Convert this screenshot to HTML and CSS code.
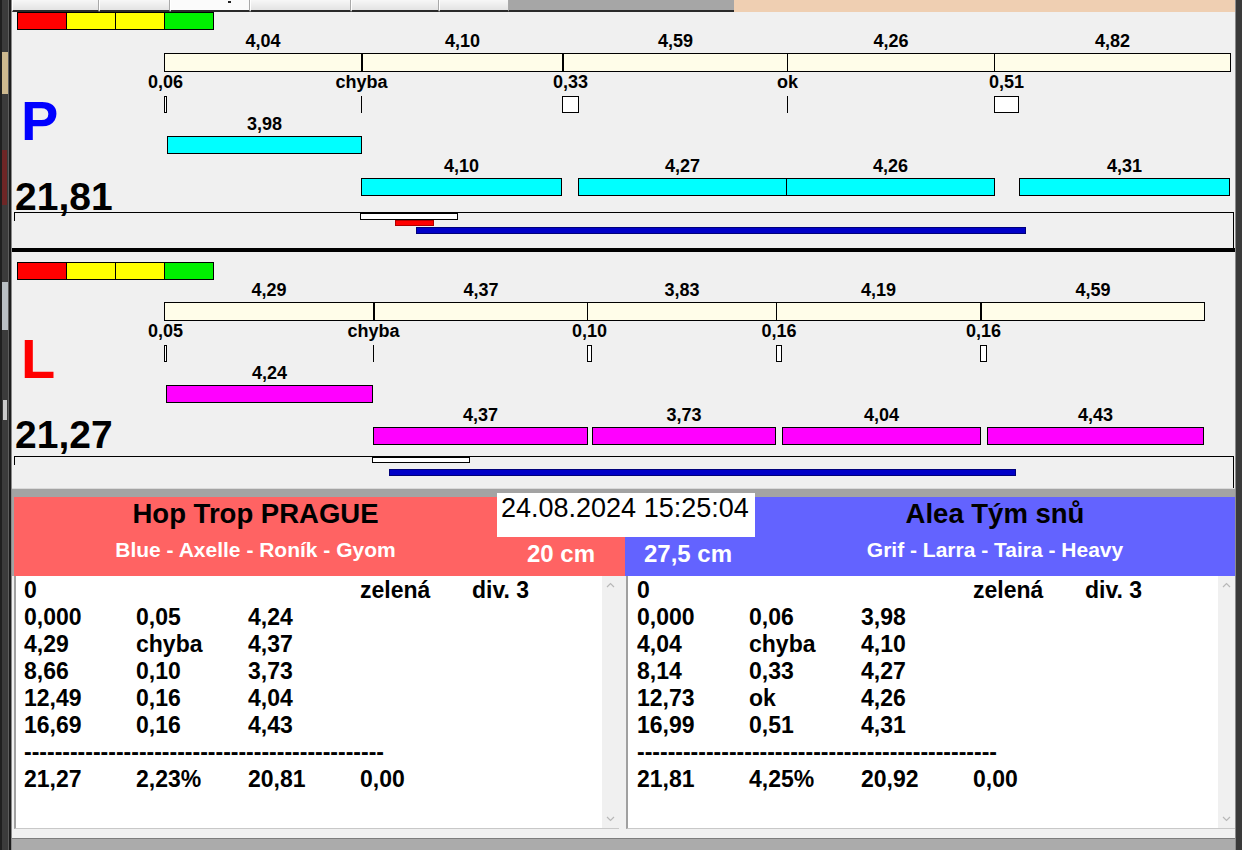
FILE: index.html
```html
<!DOCTYPE html>
<html lang="cs">
<head>
<meta charset="utf-8">
<title>Agility</title>
<link rel="stylesheet" href="styles.css">
</head>
<body>
<div class="screen">
  <div class="edge-left"></div>
  <div class="window">
    <div class="topbar">
      <span class="tab"></span>
      <span class="tab"></span>
      <span class="tab tab-active"></span>
      <span class="tab"></span>
      <span class="tab"></span>
      <span class="tab"></span>
      <span class="topbar-grey"></span>
      <span class="topbar-peach"></span>
    </div>

    <section class="lane lane-p">
      <div class="lane-side">
        <div class="indicator"><span class="ind ind-red"></span><span class="ind ind-yellow"></span><span class="ind ind-yellow"></span><span class="ind ind-green"></span></div>
        <div class="letter letter-p">P</div>
        <div class="total">21,81</div>
      </div>
      <div class="chart">
        <div class="seg-bar" style="left:152px;width:1067px">
          <div class="seg" style="width:196px"><span class="vlabel">4,04</span></div>
          <div class="seg thick" style="width:201px"><span class="vlabel">4,10</span></div>
          <div class="seg thick" style="width:225px"><span class="vlabel">4,59</span></div>
          <div class="seg" style="width:207px"><span class="vlabel">4,26</span></div>
          <div class="seg" style="width:236px"><span class="vlabel">4,82</span></div>
        </div>
        <div class="mark" style="left:152px;width:3px"><span class="mark-label">0,06</span><span class="mark-box"></span></div>
        <div class="mark" style="left:349px;width:1px"><span class="mark-label">chyba</span><span class="mark-line"></span></div>
        <div class="mark" style="left:550px;width:17px"><span class="mark-label">0,33</span><span class="mark-box"></span></div>
        <div class="mark" style="left:775px;width:1px"><span class="mark-label">ok</span><span class="mark-line"></span></div>
        <div class="mark" style="left:982px;width:25px"><span class="mark-label">0,51</span><span class="mark-box"></span></div>

        <div class="bar bar-cyan bar-start" style="left:155px;width:195px"><span class="vlabel">3,98</span></div>
        <div class="bar bar-cyan bar-run" style="left:349px;width:201px"><span class="vlabel">4,10</span></div>
        <div class="bar bar-cyan bar-run" style="left:566px;width:209px"><span class="vlabel">4,27</span></div>
        <div class="bar bar-cyan bar-run" style="left:774px;width:209px"><span class="vlabel">4,26</span></div>
        <div class="bar bar-cyan bar-run" style="left:1007px;width:211px"><span class="vlabel">4,31</span></div>
      </div>
      <div class="tbox tbox-p">
        <span class="t-white" style="left:346px;width:98px"></span>
        <span class="t-red" style="left:381px;width:39px"></span>
        <span class="t-blue" style="left:402px;width:610px"></span>
      </div>
    </section>

    <div class="lane-divider"></div>

    <section class="lane lane-l">
      <div class="lane-side">
        <div class="indicator"><span class="ind ind-red"></span><span class="ind ind-yellow"></span><span class="ind ind-yellow"></span><span class="ind ind-green"></span></div>
        <div class="letter letter-l">L</div>
        <div class="total">21,27</div>
      </div>
      <div class="chart">
        <div class="seg-bar" style="left:152px;width:1041px">
          <div class="seg" style="width:208px"><span class="vlabel">4,29</span></div>
          <div class="seg thick" style="width:214px"><span class="vlabel">4,37</span></div>
          <div class="seg" style="width:189px"><span class="vlabel">3,83</span></div>
          <div class="seg" style="width:204px"><span class="vlabel">4,19</span></div>
          <div class="seg thick" style="width:224px"><span class="vlabel">4,59</span></div>
        </div>
        <div class="mark" style="left:152px;width:3px"><span class="mark-label">0,05</span><span class="mark-box"></span></div>
        <div class="mark" style="left:361px;width:1px"><span class="mark-label">chyba</span><span class="mark-line"></span></div>
        <div class="mark" style="left:575px;width:5px"><span class="mark-label">0,10</span><span class="mark-box"></span></div>
        <div class="mark" style="left:764px;width:6px"><span class="mark-label">0,16</span><span class="mark-box"></span></div>
        <div class="mark" style="left:968px;width:7px"><span class="mark-label">0,16</span><span class="mark-box"></span></div>

        <div class="bar bar-magenta bar-start" style="left:154px;width:207px"><span class="vlabel">4,24</span></div>
        <div class="bar bar-magenta bar-run" style="left:361px;width:215px"><span class="vlabel">4,37</span></div>
        <div class="bar bar-magenta bar-run" style="left:580px;width:184px"><span class="vlabel">3,73</span></div>
        <div class="bar bar-magenta bar-run" style="left:770px;width:199px"><span class="vlabel">4,04</span></div>
        <div class="bar bar-magenta bar-run" style="left:975px;width:217px"><span class="vlabel">4,43</span></div>
      </div>
      <div class="tbox tbox-l">
        <span class="t-white" style="left:358px;width:98px"></span>
        <span class="t-blue" style="left:375px;width:627px"></span>
      </div>
    </section>

    <div class="board">
      <div class="band"></div>
      <div class="teams">
        <div class="team team-home">
          <div class="team-name">Hop Trop PRAGUE</div>
          <div class="team-members">Blue - Axelle - Roník - Gyom</div>
          <div class="team-height">20 cm</div>
        </div>
        <div class="team team-away">
          <div class="team-name">Alea Tým snů</div>
          <div class="team-members">Grif - Larra - Taira - Heavy</div>
          <div class="team-height">27,5 cm</div>
        </div>
      </div>
      <div class="clock">24.08.2024 15:25:04</div>
    </div>

    <div class="logs">
      <div class="log log-home">
        <div class="log-text">
          <div class="row"><span>0</span><span></span><span></span><span>zelená</span><span>div. 3</span></div>
          <div class="row"><span>0,000</span><span>0,05</span><span>4,24</span></div>
          <div class="row"><span>4,29</span><span>chyba</span><span>4,37</span></div>
          <div class="row"><span>8,66</span><span>0,10</span><span>3,73</span></div>
          <div class="row"><span>12,49</span><span>0,16</span><span>4,04</span></div>
          <div class="row"><span>16,69</span><span>0,16</span><span>4,43</span></div>
          <div class="rule">-----------------------------------------------</div>
          <div class="row"><span>21,27</span><span>2,23%</span><span>20,81</span><span>0,00</span></div>
        </div>
        <div class="scroll">
          <svg class="arrow" width="9" height="6" viewBox="0 0 9 6"><path d="M1 5 L4.5 1.5 L8 5" fill="none" stroke="#b8b8b8" stroke-width="1.2"/></svg>
          <svg class="arrow" width="9" height="6" viewBox="0 0 9 6"><path d="M1 1 L4.5 4.5 L8 1" fill="none" stroke="#b8b8b8" stroke-width="1.2"/></svg>
        </div>
      </div>
      <div class="log log-away">
        <div class="log-text">
          <div class="row"><span>0</span><span></span><span></span><span>zelená</span><span>div. 3</span></div>
          <div class="row"><span>0,000</span><span>0,06</span><span>3,98</span></div>
          <div class="row"><span>4,04</span><span>chyba</span><span>4,10</span></div>
          <div class="row"><span>8,14</span><span>0,33</span><span>4,27</span></div>
          <div class="row"><span>12,73</span><span>ok</span><span>4,26</span></div>
          <div class="row"><span>16,99</span><span>0,51</span><span>4,31</span></div>
          <div class="rule">-----------------------------------------------</div>
          <div class="row"><span>21,81</span><span>4,25%</span><span>20,92</span><span>0,00</span></div>
        </div>
        <div class="scroll">
          <svg class="arrow" width="9" height="6" viewBox="0 0 9 6"><path d="M1 5 L4.5 1.5 L8 5" fill="none" stroke="#b8b8b8" stroke-width="1.2"/></svg>
          <svg class="arrow" width="9" height="6" viewBox="0 0 9 6"><path d="M1 1 L4.5 4.5 L8 1" fill="none" stroke="#b8b8b8" stroke-width="1.2"/></svg>
        </div>
      </div>
    </div>

    <div class="status"></div>
  </div>
  <div class="edge-right"></div>
</div>
</body>
</html>
```

FILE: styles.css
```css
* { box-sizing: border-box; margin: 0; padding: 0; }
html, body { width: 1242px; height: 850px; overflow: hidden; }
body {
  background: #f0f0f0;
  font-family: "Liberation Sans", Arial, sans-serif;
  color: #000;
}

.screen { display: flex; width: 1242px; height: 850px; }

.edge-left {
  width: 12px;
  flex: none;
  background:
    linear-gradient(#cdb98f, #cdb98f) 2px 52px / 6px 42px no-repeat,
    linear-gradient(#6e2626, #6e2626) 2px 150px / 5px 55px no-repeat,
    linear-gradient(#b9bfc3, #b9bfc3) 2px 282px / 6px 48px no-repeat,
    linear-gradient(#c9c9c9, #c9c9c9) 3px 400px / 4px 20px no-repeat,
    linear-gradient(to right, #1f1f1f 0 2px, #3b3b3b 2px 8px, #5e5e5e 8px 9px, #1c1c1c 9px 11px, #8a8a8a 11px 12px);
}
.window { width: 1223px; flex: none; display: flex; flex-direction: column; }
.edge-right {
  width: 7px;
  flex: none;
  background: #3a3a3a;
  border-left: 1px solid #8c8c8c;
}

/* top strip */
.topbar {
  height: 12px;
  flex: none;
  display: grid;
  grid-template-columns: 87px 71px 80px 101px 88px 70px 225px 1fr;
}
.tab {
  background: linear-gradient(#f7f7f7, #e3e3e3);
  border-right: 1px solid #a9a9a9;
  border-left: 1px solid #ffffff;
  border-bottom: 2px solid #2a2a2a;
}
.tab-active { background: #fbfbfb; position: relative; }
.tab-active::after {
  content: "";
  position: absolute;
  left: 57px;
  top: 1px;
  width: 3px;
  height: 2px;
  background: #222;
}
.topbar-grey { background: #a6a6a6; border-bottom: 2px solid #2a2a2a; }
.topbar-peach { background: #efcfb2; }

/* lanes */
.lane { position: relative; height: 236px; flex: none; }
.lane-side { padding-left: 5px; }
.lane-l .lane-side { padding-top: 10px; }

.indicator {
  display: flex;
  width: 197px;
  height: 18px;
  border: 1px solid #000;
}
.ind { flex: none; width: 49px; border-right: 1px solid #000; }
.ind:last-child { width: 48px; border-right: 0; }
.ind-red { background: #ff0000; }
.ind-yellow { background: #ffff00; }
.ind-green { background: #00f000; }

.letter {
  font-size: 56px;
  line-height: 56px;
  font-weight: 700;
  margin-top: 63px;
  margin-left: 4px;
}
.lane-l .letter { margin-top: 51px; }
.letter-p { color: #0000ff; }
.letter-l { color: #ff0000; }

.total {
  font-size: 39px;
  line-height: 39px;
  font-weight: 700;
  margin-top: 28px;
  margin-left: -2px;
}

.lane-divider { height: 4px; flex: none; background: #000; }

/* chart canvas */
.chart { position: absolute; left: 0; right: 0; top: 0; height: 200px; }
.lane-l .chart { top: 9px; }

.seg-bar {
  position: absolute;
  top: 41px;
  height: 19px;
  display: flex;
  border: 1px solid #000;
  background: #fffde9;
}
.seg { flex: none; position: relative; }
.seg + .seg { border-left: 1px solid #000; }
.seg.thick { border-left-width: 2px; }

.vlabel {
  position: absolute;
  left: 0;
  right: 0;
  bottom: calc(100% + 4.5px);
  text-align: center;
  font-size: 18px;
  line-height: 18px;
  font-weight: 700;
  white-space: nowrap;
}

.mark {
  position: absolute;
  top: 61px;
  display: flex;
  flex-direction: column;
  align-items: center;
}
.mark-label {
  font-size: 18px;
  line-height: 18px;
  font-weight: 700;
  white-space: nowrap;
}
.mark-box {
  margin-top: 5px;
  width: 100%;
  height: 17px;
  background: #fff;
  border: 1px solid #000;
}
.mark-line {
  margin-top: 5px;
  width: 1px;
  height: 17px;
  background: #000;
}

.bar {
  position: absolute;
  height: 18px;
  border: 1px solid #000;
}
.bar-start { top: 124px; }
.bar-run { top: 166px; }
.bar-cyan { background: #00ffff; }
.bar-magenta { background: #ff00ff; }

/* timing box */
.tbox {
  position: absolute;
  left: 2px;
  width: 1220px;
  bottom: 0;
  border-top: 1px solid #000;
  border-right: 1px solid #000;
}
.tbox-p { top: 200px; }
.tbox-l { top: 204px; }
.tbox::before {
  content: "";
  position: absolute;
  left: 0;
  top: 0;
  width: 1px;
  height: 8px;
  background: #000;
}
.t-white {
  position: absolute;
  top: 0;
  height: 7px;
  background: #fff;
  border: 1px solid #000;
}
.tbox-l .t-white { height: 6px; }
.t-red {
  position: absolute;
  top: 7px;
  height: 6px;
  background: #ff0000;
  border: 1px solid #b00000;
}
.t-blue {
  position: absolute;
  top: 14px;
  height: 7px;
  background: #0000c8;
  border: 1px solid #00007a;
}
.tbox-l .t-blue { top: 12px; }

/* score board */
.board { position: relative; flex: none; }
.band {
  height: 9px;
  background: #a3a3a3;
  border-top: 1px solid #dadada;
}
.teams {
  display: grid;
  grid-template-columns: 611px 610px;
  height: 79px;
  padding-left: 2px;
  background: #a3a3a3;
}
.team { display: grid; grid-template-rows: 39px 40px; }
.team-home { background: #ff6363; grid-template-columns: 483px 128px; }
.team-away { background: #6363ff; grid-template-columns: 130px 480px; }
.team-name {
  font-size: 27.5px;
  line-height: 33px;
  font-weight: 700;
  text-align: center;
  white-space: nowrap;
}
.team-members {
  font-size: 21px;
  line-height: 27px;
  font-weight: 700;
  color: #fff;
  text-align: center;
  white-space: nowrap;
}
.team-height {
  font-size: 24px;
  line-height: 35px;
  font-weight: 700;
  color: #fff;
  text-align: center;
  white-space: nowrap;
}
.team-home .team-name { grid-area: 1 / 1; }
.team-home .team-members { grid-area: 2 / 1; }
.team-home .team-height { grid-area: 2 / 2; }
.team-away .team-name { grid-area: 1 / 2; }
.team-away .team-members { grid-area: 2 / 2; }
.team-away .team-height { grid-area: 2 / 1; padding-right: 4px; }

.clock {
  position: absolute;
  left: 485px;
  top: 5px;
  width: 258px;
  height: 44px;
  background: #fff;
  font-size: 27px;
  line-height: 31px;
  padding-left: 4px;
  white-space: nowrap;
  overflow: hidden;
}

/* logs */
.logs {
  display: flex;
  height: 253px;
  flex: none;
  padding-left: 2px;
}
.log {
  display: flex;
  border-left: 2px solid #a0a0a0;
  border-bottom: 1px solid #c8c8c8;
  background: #fff;
}
.log-home { width: 605px; }
.log-away { width: 609px; margin-left: 7px; }
.log-text {
  flex: 1;
  padding: 1px 0 0 8px;
  font-size: 23px;
  line-height: 27px;
  font-weight: 700;
  white-space: nowrap;
  overflow: hidden;
}
.log-away .log-text { padding-left: 9px; }
.row { display: grid; grid-template-columns: 112px 112px 112px 112px auto; }
.rule { letter-spacing: 0; }

.scroll {
  width: 17px;
  flex: none;
  background: #f0f0f0;
  display: flex;
  flex-direction: column;
  justify-content: space-between;
  align-items: center;
  padding: 6px 0 6px;
}
.arrow { display: block; }

.status {
  flex: 1;
  background: linear-gradient(#f0f0f0 0 9px, #7c7c7c 9px 10px, #ababab 10px);
}
```
